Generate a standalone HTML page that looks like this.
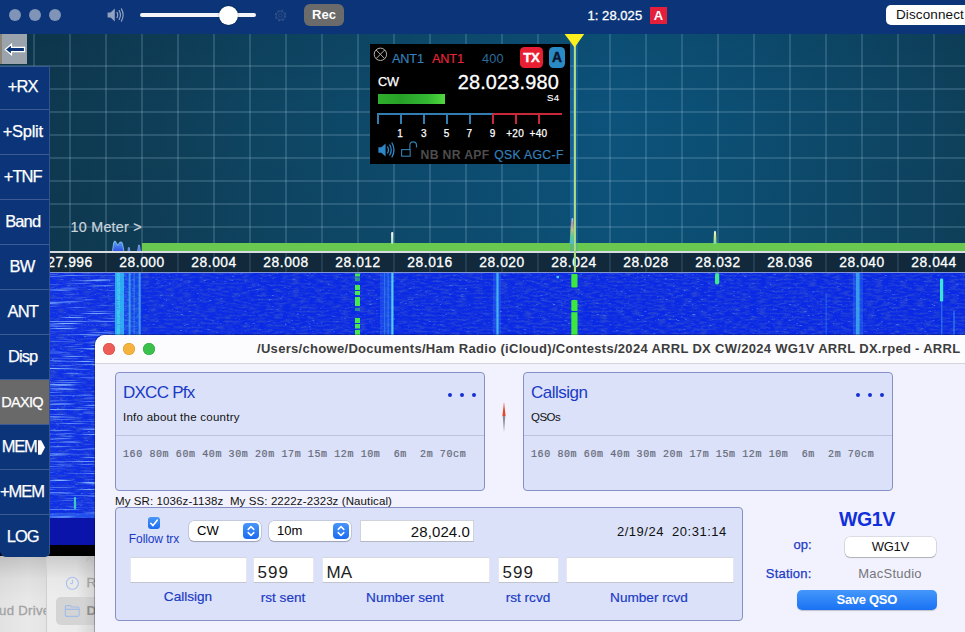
<!DOCTYPE html>
<html><head><meta charset="utf-8"><title>SDR</title>
<style>
*{box-sizing:border-box;margin:0;padding:0}
html,body{width:965px;height:632px;overflow:hidden;background:#e9e9e9;font-family:"Liberation Sans",sans-serif;}
.abs{position:absolute}
#topbar{left:0;top:0;width:965px;height:34px;background:#0b3578}
.tl{width:12.4px;height:12.4px;border-radius:50%;background:#8094b8;top:8.7px}
#pan{left:0;top:34px;width:965px;height:218px;background:linear-gradient(180deg,rgba(0,0,0,.05),rgba(0,0,0,0) 35%,rgba(0,0,0,.02)),linear-gradient(90deg,#0d364c 0%,#0e3a52 8.3%,#0f3e58 16.6%,#0e4460 26.4%,#0d4b6e 44.5%,#0c527a 63.7%,#0c4e73 75.6%,#0e425e 96.9%,#0e405a 100%);overflow:hidden}
.vg{top:0;width:1.6px;height:218px;background:rgba(170,205,228,.19)}
.hg{left:0;width:965px;height:1.6px;background:rgba(170,205,228,.19)}
#fscale{left:0;top:251px;width:965px;height:22.2px;background:#11293a;border-top:2px solid #d6dce0;border-bottom:1.2px solid #7f96d0;overflow:hidden}
.fl{top:0;width:72px;text-align:center;color:#fff;font-size:13.8px;letter-spacing:.55px;line-height:19.2px;-webkit-text-stroke:.3px #fff;padding-left:.55px}
#wf{left:0;top:273px;width:965px;height:272px;background:#0b30d8;overflow:hidden}
#side{left:0;top:66px;width:49.5px;height:490.5px;background:#0c3479;border-radius:0 0 5px 6px;overflow:hidden;border-right:1px solid #34528c}
.sb{left:0;width:49px;padding-right:3.6px;height:45px;color:#fff;font-size:16.5px;letter-spacing:-.9px;-webkit-text-stroke:.25px #fff;text-align:center;line-height:44px;border-top:1px solid #3c5a94;white-space:nowrap}
#win{left:95px;top:335px;width:880px;height:310px;background:#f1f2fd;border-radius:10px 0 0 0;overflow:hidden;box-shadow:0 0 0 1px rgba(0,0,0,.25)}
#tbar{left:0;top:0;width:880px;height:29px;background:#fcfcfe;border-bottom:1px solid #d4d4dc}
.panel{background:#dae1f8;border:1px solid #8790c6;border-radius:4px}
.blue{color:#1b3ac6}
.ts{-webkit-text-stroke:.25px #1b3ac6}
.inp{background:#fff;border:1px solid #e4e6f0;border-top-color:#d4d6e0;border-bottom-color:#c2c4ce;height:26px;top:49px;font-size:17px;line-height:29px;padding-left:3.5px;overflow:hidden;color:#1c1c1c}
.lab{top:81.5px;font-size:13.6px;color:#1b3ac6;-webkit-text-stroke:.18px #1b3ac6;text-align:center;width:140px;white-space:nowrap}
.sel{top:13px;height:20px;background:#fff;border-radius:5px;box-shadow:0 0 0 .5px rgba(0,0,0,.2),0 1px 1px rgba(0,0,0,.2);font-size:13px;line-height:20px;padding-left:8px}
.step{right:2px;top:2px;width:16px;height:16px;border-radius:4px;background:linear-gradient(#4a96f8,#1a6cf0)}
.bands{font-family:"Liberation Mono",monospace;font-size:10px;color:#666a78;-webkit-text-stroke:.2px #666a78;white-space:pre;letter-spacing:.6px}
.mt{top:70px;width:2px;height:9.7px}
.ml{top:83.6px;width:20px;margin-left:-10px;text-align:center;font-size:10px;line-height:12px;color:#fff;white-space:nowrap;letter-spacing:.35px;-webkit-text-stroke:.25px #fff}

</style></head><body>
<div class="abs" style="left:0;top:545px;width:95px;height:12px;background:#000"></div>
<div class="abs" style="left:0;top:556px;width:46px;height:76px;background:linear-gradient(180deg,rgba(0,0,0,.16),rgba(0,0,0,.04) 30%,rgba(0,0,0,0) 60%),linear-gradient(90deg,#e2e2e2,#e9e9e9 60%,#e4e4e4)"></div>
<div class="abs" style="left:45.5px;top:556px;width:1px;height:76px;background:#cfcfcf"></div>
<div class="abs" style="left:46.5px;top:556px;width:49px;height:76px;background:linear-gradient(180deg,rgba(0,0,0,.14),rgba(0,0,0,.02) 30%,rgba(0,0,0,0) 55%),linear-gradient(90deg,#ededed 0%,#ebebeb 60%,#d4d4d4 100%)"></div>
<div class="abs" style="left:56px;top:597px;width:40px;height:28px;background:linear-gradient(90deg,#d4d4d4 70%,#c4c4c4);border-radius:5px 0 0 5px"></div>
<div class="abs" style="left:-1px;top:602px;width:47px;overflow:hidden;font-size:13.2px;line-height:18px;color:#a2a2a2;white-space:nowrap;letter-spacing:.3px;-webkit-text-stroke:.3px #a2a2a2">ud Drive</div>
<svg class="abs" style="left:65px;top:576px" width="15" height="15" viewBox="0 0 15 15"><circle cx="7.4" cy="7.3" r="6" fill="none" stroke="#a9c1ec" stroke-width="1.1"/><path d="M7.4 3.6 L7.4 7.6 L5 7.6" fill="none" stroke="#a9c1ec" stroke-width="1"/></svg>
<svg class="abs" style="left:64px;top:604px" width="17" height="14" viewBox="0 0 17 14"><path d="M1.3 3.2 Q1.3 1.6 2.9 1.6 L6 1.6 L7.4 3 L13.6 3 Q15.2 3 15.2 4.6 L15.2 10.8 Q15.2 12.4 13.6 12.4 L2.9 12.4 Q1.3 12.4 1.3 10.8Z M1.3 5.4 L15.2 5.4" fill="none" stroke="#a2bde8" stroke-width="1.1"/></svg>
<div class="abs" style="left:86.5px;top:574px;font-size:13.5px;line-height:18px;color:#a0a0a0;-webkit-text-stroke:.3px #a0a0a0">R</div>
<div class="abs" style="left:86.5px;top:602px;font-size:13.5px;line-height:18px;color:#8c8c8c;font-weight:bold">D</div>
<svg class="abs" style="left:63px;top:556px" width="30" height="8" viewBox="0 0 30 8"><path d="M2 0 L5 4 L8 0 M9 0 L12 4 L15 0" fill="none" stroke="#c4cad6" stroke-width="1"/><path d="M24 5 L26.5 0 L29 5" fill="none" stroke="#b8b8b8" stroke-width="1.2"/></svg>

<div id="topbar" class="abs">
 <div class="abs tl" style="left:8.8px"></div><div class="abs tl" style="left:28.8px"></div><div class="abs tl" style="left:48.8px"></div>
 <svg class="abs" style="left:107px;top:7px" width="18" height="16" viewBox="0 0 18 16"><path d="M0.6 5.4 L3.6 5.4 L7.8 1.6 L7.8 14.4 L3.6 10.6 L0.6 10.6Z" fill="#93a2bf"/><path d="M10 5.4 Q11.5 8 10 10.6 M12.2 3.6 Q14.7 8 12.2 12.4 M14.4 1.9 Q17.8 8 14.4 14.1" fill="none" stroke="#93a2bf" stroke-width="1.2" stroke-linecap="round"/></svg>
 <div class="abs" style="left:140px;top:13px;width:116px;height:4px;border-radius:2px;background:#f4f5f8"></div>
 <div class="abs" style="left:218.5px;top:5.5px;width:19px;height:19px;border-radius:50%;background:#fff;box-shadow:0 0 2px rgba(0,0,0,.45)"></div>
 <svg class="abs" style="left:273px;top:8px" width="15" height="15" viewBox="0 0 15 15"><circle cx="7.5" cy="7.5" r="5.2" fill="none" stroke="#34528c" stroke-width="1.1" stroke-dasharray="2.2 1.9"/><circle cx="7.5" cy="7.5" r="4.2" fill="none" stroke="#34528c" stroke-width=".9"/><circle cx="7.5" cy="7.5" r="1.8" fill="none" stroke="#34528c" stroke-width=".8"/></svg>
 <div class="abs" style="left:304px;top:4px;width:40px;height:22px;border-radius:6px;background:#6b6b6b;color:#fff;font-weight:bold;font-size:13px;line-height:22px;text-align:center">Rec</div>
 <div class="abs" style="left:587.5px;top:7.5px;font-size:13px;color:#fff;line-height:16px;letter-spacing:.05px;white-space:nowrap;-webkit-text-stroke:.3px #fff">1: 28.025</div>
 <div class="abs" style="left:650px;top:6.5px;width:17px;height:17px;background:#e31f3b;color:#fff;font-weight:bold;font-size:13px;line-height:17px;text-align:center">A</div>
 <div class="abs" style="left:886px;top:5px;width:90px;height:19.5px;border-radius:5px;background:#fff;color:#111;font-size:13.5px;line-height:20px;padding-left:10px;letter-spacing:.12px">Disconnect</div>
</div>

<div id="pan" class="abs">
<div class="abs vg" style="left:33.2px"></div>
<div class="abs vg" style="left:69.2px"></div>
<div class="abs vg" style="left:105.2px"></div>
<div class="abs vg" style="left:141.2px"></div>
<div class="abs vg" style="left:177.2px"></div>
<div class="abs vg" style="left:213.2px"></div>
<div class="abs vg" style="left:249.2px"></div>
<div class="abs vg" style="left:285.2px"></div>
<div class="abs vg" style="left:321.2px"></div>
<div class="abs vg" style="left:357.2px"></div>
<div class="abs vg" style="left:393.2px"></div>
<div class="abs vg" style="left:429.2px"></div>
<div class="abs vg" style="left:465.2px"></div>
<div class="abs vg" style="left:501.2px"></div>
<div class="abs vg" style="left:537.2px"></div>
<div class="abs vg" style="left:573.2px"></div>
<div class="abs vg" style="left:609.2px"></div>
<div class="abs vg" style="left:645.2px"></div>
<div class="abs vg" style="left:681.2px"></div>
<div class="abs vg" style="left:717.2px"></div>
<div class="abs vg" style="left:753.2px"></div>
<div class="abs vg" style="left:789.2px"></div>
<div class="abs vg" style="left:825.2px"></div>
<div class="abs vg" style="left:861.2px"></div>
<div class="abs vg" style="left:897.2px"></div>
<div class="abs vg" style="left:933.2px"></div>
<div class="abs hg" style="top:31.2px"></div>
<div class="abs hg" style="top:54.2px"></div>
<div class="abs hg" style="top:77.2px"></div>
<div class="abs hg" style="top:100.2px"></div>
<div class="abs hg" style="top:123.2px"></div>
<div class="abs hg" style="top:146.2px"></div>
<div class="abs hg" style="top:169.2px"></div>
<div class="abs hg" style="top:192.2px"></div>
<div class="abs" style="left:70.6px;top:184px;font-size:14.3px;color:#c9d4dd;line-height:18px;white-space:nowrap;letter-spacing:.25px;-webkit-text-stroke:.2px #c9d4dd">10 Meter &gt;</div>
<svg class="abs" style="left:110px;top:204px" width="34" height="14" viewBox="0 0 34 14">
 <defs><linearGradient id="bl" x1="0" x2="0" y1="0" y2="1"><stop offset="0" stop-color="#58a8f4"/><stop offset="1" stop-color="#2c48e0"/></linearGradient></defs>
 <path d="M2.4 14 L3.6 5 L4.6 3 L5.6 3.4 L7.6 7.4 L9.8 4.2 L11.6 4 L12.6 6 L13.8 12.6 L14.6 14Z" fill="url(#bl)" stroke="#a8d4fa" stroke-width=".7"/>
 <path d="M17.8 14 L18.4 9.6 L19.4 9.6 L20 14Z" fill="#4a70ec" stroke="#b8d4fa" stroke-width=".5"/>
 <path d="M27.4 14 L28.6 7 L29.4 7 L30.6 14Z" fill="#4a70ec" stroke="#b8d4fa" stroke-width=".5"/>
</svg>
<div class="abs" style="left:142px;top:209px;width:823px;height:8.5px;background:#69c850"></div>
<!-- peaks: pan top = 34 -->
<svg class="abs" style="left:388px;top:197px" width="8" height="13" viewBox="0 0 8 13"><defs><linearGradient id="p1" x1="0" x2="0" y1="0" y2="1"><stop offset="0" stop-color="#f4f8f4"/><stop offset="1" stop-color="#a8e4c0"/></linearGradient></defs><rect x="3.1" y="1" width="2.2" height="12" rx="1" fill="url(#p1)"/></svg>
<svg class="abs" style="left:566px;top:182px" width="12" height="28" viewBox="0 0 12 28"><defs><linearGradient id="p2" x1="0" x2="0" y1="0" y2="1"><stop offset="0" stop-color="#f0e8f0"/><stop offset=".2" stop-color="#e09088"/><stop offset=".45" stop-color="#e0d070"/><stop offset=".7" stop-color="#70d878"/><stop offset="1" stop-color="#50c8c0"/></linearGradient></defs><path d="M3.6 28 L4.6 12 L5.6 2.4 Q6.4 1.6 7.2 2.4 L7.8 12 L8.2 28Z" fill="url(#p2)"/></svg>
<svg class="abs" style="left:710px;top:195px" width="10" height="15" viewBox="0 0 10 15"><defs><linearGradient id="p3" x1="0" x2="0" y1="0" y2="1"><stop offset="0" stop-color="#f4f4e8"/><stop offset=".4" stop-color="#d8e890"/><stop offset="1" stop-color="#70d8a0"/></linearGradient></defs><path d="M3.4 15 L4 3 Q5 .4 6 3 L6.6 15Z" fill="url(#p3)"/></svg>

</div>
<div id="fscale" class="abs">
<div class="abs" style="left:33.2px;top:0;width:1.6px;height:20px;background:rgba(170,205,228,.13)"></div>
<div class="abs" style="left:69.2px;top:0;width:1.6px;height:20px;background:rgba(170,205,228,.13)"></div>
<div class="abs" style="left:105.2px;top:0;width:1.6px;height:20px;background:rgba(170,205,228,.13)"></div>
<div class="abs" style="left:141.2px;top:0;width:1.6px;height:20px;background:rgba(170,205,228,.13)"></div>
<div class="abs" style="left:177.2px;top:0;width:1.6px;height:20px;background:rgba(170,205,228,.13)"></div>
<div class="abs" style="left:213.2px;top:0;width:1.6px;height:20px;background:rgba(170,205,228,.13)"></div>
<div class="abs" style="left:249.2px;top:0;width:1.6px;height:20px;background:rgba(170,205,228,.13)"></div>
<div class="abs" style="left:285.2px;top:0;width:1.6px;height:20px;background:rgba(170,205,228,.13)"></div>
<div class="abs" style="left:321.2px;top:0;width:1.6px;height:20px;background:rgba(170,205,228,.13)"></div>
<div class="abs" style="left:357.2px;top:0;width:1.6px;height:20px;background:rgba(170,205,228,.13)"></div>
<div class="abs" style="left:393.2px;top:0;width:1.6px;height:20px;background:rgba(170,205,228,.13)"></div>
<div class="abs" style="left:429.2px;top:0;width:1.6px;height:20px;background:rgba(170,205,228,.13)"></div>
<div class="abs" style="left:465.2px;top:0;width:1.6px;height:20px;background:rgba(170,205,228,.13)"></div>
<div class="abs" style="left:501.2px;top:0;width:1.6px;height:20px;background:rgba(170,205,228,.13)"></div>
<div class="abs" style="left:537.2px;top:0;width:1.6px;height:20px;background:rgba(170,205,228,.13)"></div>
<div class="abs" style="left:573.2px;top:0;width:1.6px;height:20px;background:rgba(170,205,228,.13)"></div>
<div class="abs" style="left:609.2px;top:0;width:1.6px;height:20px;background:rgba(170,205,228,.13)"></div>
<div class="abs" style="left:645.2px;top:0;width:1.6px;height:20px;background:rgba(170,205,228,.13)"></div>
<div class="abs" style="left:681.2px;top:0;width:1.6px;height:20px;background:rgba(170,205,228,.13)"></div>
<div class="abs" style="left:717.2px;top:0;width:1.6px;height:20px;background:rgba(170,205,228,.13)"></div>
<div class="abs" style="left:753.2px;top:0;width:1.6px;height:20px;background:rgba(170,205,228,.13)"></div>
<div class="abs" style="left:789.2px;top:0;width:1.6px;height:20px;background:rgba(170,205,228,.13)"></div>
<div class="abs" style="left:825.2px;top:0;width:1.6px;height:20px;background:rgba(170,205,228,.13)"></div>
<div class="abs" style="left:861.2px;top:0;width:1.6px;height:20px;background:rgba(170,205,228,.13)"></div>
<div class="abs" style="left:897.2px;top:0;width:1.6px;height:20px;background:rgba(170,205,228,.13)"></div>
<div class="abs" style="left:933.2px;top:0;width:1.6px;height:20px;background:rgba(170,205,228,.13)"></div>
<div class="abs fl" style="left:33.8px">27.996</div>
<div class="abs fl" style="left:105.8px">28.000</div>
<div class="abs fl" style="left:177.8px">28.004</div>
<div class="abs fl" style="left:249.8px">28.008</div>
<div class="abs fl" style="left:321.8px">28.012</div>
<div class="abs fl" style="left:393.8px">28.016</div>
<div class="abs fl" style="left:465.8px">28.020</div>
<div class="abs fl" style="left:537.8px">28.024</div>
<div class="abs fl" style="left:609.8px">28.028</div>
<div class="abs fl" style="left:681.8px">28.032</div>
<div class="abs fl" style="left:753.8px">28.036</div>
<div class="abs fl" style="left:825.8px">28.040</div>
<div class="abs fl" style="left:897.8px">28.044</div>
</div>
<div id="wf" class="abs">
<svg class="abs" style="left:0;top:0" width="965" height="272" viewBox="0 0 965 272">
 <defs>
  <filter id="nz" x="0" y="0" width="100%" height="100%">
   <feTurbulence type="fractalNoise" baseFrequency="0.25 0.8" numOctaves="3" seed="7" result="t"/>
   <feColorMatrix in="t" type="matrix" values="0 0 0 0 0.16  0 0 0 0 0.40  0 0 0 0 1  2.4 0 0 0 -1.58"/>
  </filter>
  <filter id="nz2" x="0" y="0" width="100%" height="100%">
   <feTurbulence type="fractalNoise" baseFrequency="0.025 0.85" numOctaves="2" seed="3" result="t"/>
   <feColorMatrix in="t" type="matrix" values="0 0 0 0 0.22  0 0 0 0 0.45  0 0 0 0 1  3.4 0 0 0 -1.85"/>
  </filter>
  <filter id="nz3" x="0" y="0" width="100%" height="100%">
   <feTurbulence type="fractalNoise" baseFrequency="0.5 0.05" numOctaves="2" seed="11" result="t"/>
   <feColorMatrix in="t" type="matrix" values="0 0 0 0 0.25  0 0 0 0 0.85  0 0 0 0 1  3.0 0 0 0 -0.9"/>
  </filter>
  <filter id="nzd" x="0" y="0" width="100%" height="100%">
   <feTurbulence type="fractalNoise" baseFrequency="0.12 0.5" numOctaves="3" seed="23" result="t"/>
   <feColorMatrix in="t" type="matrix" values="0 0 0 0 0.02  0 0 0 0 0.06  0 0 0 0 0.66  2.6 0 0 0 -1.05"/>
  </filter>
  <filter id="nz4" x="0" y="0" width="100%" height="100%">
   <feTurbulence type="fractalNoise" baseFrequency="0.25 0.7" numOctaves="2" seed="41" result="t"/>
   <feColorMatrix in="t" type="matrix" values="0 0 0 0 0.06  0 0 0 0 0.28  0 0 0 0 0.92  3.0 0 0 0 -1.5"/>
  </filter>
  <linearGradient id="lf" x1="0" x2="1"><stop offset="0" stop-color="#2a5cf0" stop-opacity=".12"/><stop offset="1" stop-color="#2a5cf0" stop-opacity="0"/></linearGradient>
 </defs>
 <rect width="965" height="272" fill="#0a29e4"/>
 <rect x="49" width="200" height="272" fill="url(#lf)"/>
 <rect width="965" height="272" filter="url(#nzd)"/>
 <rect width="965" height="272" filter="url(#nz)"/>
 <rect x="49" width="66" height="246" filter="url(#nz2)"/>
 <!-- cyan band near 28.000 -->
 <rect x="115" y="0" width="26" height="245" fill="#2a80f0" opacity=".28"/>
 <rect x="115" y="0" width="9" height="245" fill="#30bcf2" opacity=".88"/>
 <rect x="117" y="0" width="3" height="245" fill="#48e0f4" opacity=".5"/>
 <rect x="115" y="0" width="9" height="245" filter="url(#nz4)"/>
 <rect x="128.6" y="0" width="2" height="245" fill="#48b8f4" opacity=".7"/>
 <rect x="133.5" y="0" width="1.5" height="245" fill="#48b8f4" opacity=".3"/>
 <rect x="138.6" y="0" width="2" height="245" fill="#48b8f4" opacity=".7"/>
 <rect x="124" y="0" width="17" height="245" filter="url(#nz4)" opacity=".6"/>
 <!-- 28.012 green dashes x=357.5 -->
 <g fill="#46e84e"><rect x="355" y="0.5" width="5" height="3"/><rect x="355" y="4.5" width="5" height="3.5" opacity=".55"/><rect x="355" y="12" width="5" height="5"/><rect x="355" y="18" width="5" height="4"/><rect x="355" y="24" width="5" height="9"/><rect x="355" y="35" width="5" height="3" opacity=".5"/><rect x="355" y="45" width="5" height="5"/><rect x="355" y="51" width="5" height="4.5"/><rect x="355" y="57" width="5" height="6"/></g>
 <!-- 28.0139 cyan line -->
 <rect x="380" y="0" width="13" height="246" fill="#2a70f4" opacity=".38"/>
 <rect x="384" y="0" width="1.2" height="246" fill="#48b8f4" opacity=".35"/>
 <rect x="387.5" y="0" width="1.2" height="246" fill="#48b8f4" opacity=".4"/>
 <rect x="391.3" y="0" width="2.2" height="246" fill="#58dcf6" opacity=".9"/>
 <!-- 28.0198 cyan -->
 <rect x="493" y="0" width="8" height="246" fill="#2a70f4" opacity=".4"/>
 <rect x="496.4" y="0" width="2.2" height="246" fill="#4cccf4" opacity=".8"/>
 <!-- dot -->
 <rect x="556.5" y="3" width="2.5" height="2" fill="#40d0f0"/>
 <!-- 28.024 green -->
 <g fill="#3ce83e"><rect x="571.3" y="1" width="6.2" height="13.5" rx="1"/><rect x="571.3" y="27" width="6.2" height="11" rx="1"/><rect x="571.3" y="39.2" width="6.2" height="23"/></g>
 <!-- 28.032 green -->
 <rect x="715" y="0" width="4.2" height="11.5" rx="1.8" fill="#40e88c"/>
 <!-- 28.0398 cyan -->
 <rect x="853" y="0" width="10" height="246" fill="#2a78f4" opacity=".42"/>
 <rect x="856" y="0" width="3.6" height="246" fill="#44bcf0" opacity=".7"/>
 <!-- 28.0445 -->
 <rect x="940" y="5.5" width="3.2" height="23" rx="1.2" fill="#3ce4d8"/>
 <rect x="941" y="28" width="1.4" height="40" fill="#3ab0f0" opacity=".45"/>
 <rect x="825.5" y="20" width="1.4" height="45" fill="#3a90f0" opacity=".4"/>
 <rect x="953.2" y="38" width="1.6" height="30" fill="#3aa0f0" opacity=".55"/>
 <!-- bottom left tick -->
 <rect x="73.9" y="224" width="2.2" height="12" rx="1" fill="#40d8c0" opacity=".9"/>
 <rect x="49" y="240" width="46" height="5" fill="#3a78f8" opacity=".45"/>
 <!-- dark band -->
 <rect x="0" y="245" width="965" height="27" fill="#0a14aa"/>
</svg>
</div>

<!-- passband + marker line -->
<div class="abs" style="left:569.5px;top:34px;width:8.8px;height:218px;background:rgba(60,150,230,.26)"></div>
<div class="abs" style="left:573.6px;top:46px;width:2.2px;height:226px;background:linear-gradient(90deg,#c0dc74,#92d690)"></div>
<svg class="abs" style="left:564px;top:34px" width="21" height="14" viewBox="0 0 21 14"><path d="M0.6 0 L20.2 0 L10.6 13.5Z" fill="#fdf01e"/></svg>
<!-- VFO flag -->
<div class="abs" id="flag" style="left:370px;top:44px;width:199.5px;height:119.6px;background:#000;overflow:hidden">
 <svg class="abs" style="left:2.5px;top:2.5px" width="15" height="15" viewBox="0 0 15 15"><circle cx="7.4" cy="7.3" r="6.2" fill="none" stroke="#b4b0a8" stroke-width="1"/><path d="M3.1 3 L11.7 11.6 M11.7 3 L3.1 11.6" stroke="#b4b0a8" stroke-width="1"/></svg>
 <div class="abs" style="left:22px;top:7.6px;font-size:12.7px;line-height:15px;color:#3280bc;letter-spacing:-.15px;-webkit-text-stroke:.2px #3280bc">ANT1</div>
 <div class="abs" style="left:62px;top:7.6px;font-size:12.7px;line-height:15px;color:#e6243a;letter-spacing:-.15px;-webkit-text-stroke:.2px #e6243a">ANT1</div>
 <div class="abs" style="left:112px;top:7.6px;font-size:12.7px;line-height:15px;color:#2a6e9e;letter-spacing:.25px">400</div>
 <div class="abs" style="left:150px;top:3px;width:23px;height:21px;border-radius:4.5px;background:#e81f33;color:#fff;font-weight:bold;font-size:13.2px;line-height:21px;text-align:center;letter-spacing:-.2px;-webkit-text-stroke:.4px #fff">TX</div>
 <div class="abs" style="left:179px;top:3px;width:16px;height:21px;border-radius:4.5px;background:#2a8ac6;color:#08152c;font-weight:bold;font-size:13.8px;line-height:22.4px;text-align:center;-webkit-text-stroke:.4px #08152c">A</div>
 <div class="abs" style="left:8px;top:30px;font-size:12.7px;line-height:16px;color:#fff;-webkit-text-stroke:.25px #fff;letter-spacing:-.2px">CW</div>
 <div class="abs" style="left:50px;top:26px;width:139px;text-align:right;font-size:19.9px;line-height:24px;color:#fff;white-space:nowrap;letter-spacing:.18px;-webkit-text-stroke:.3px #fff">28.023.980</div>
 <div class="abs" style="left:159.2px;top:48px;width:30px;text-align:right;font-size:9.6px;line-height:12px;color:#fff;letter-spacing:.2px;-webkit-text-stroke:.15px #fff">S4</div>
 <div class="abs" style="left:8px;top:50px;width:67px;height:9.8px;background:linear-gradient(90deg,#2fae2c,#28a028 35%,#33b833 75%,#52d83e)"></div>
 <!-- meter -->
 <div class="abs" style="left:7.2px;top:69px;width:115.4px;height:2.1px;background:#337eb0"></div>
 <div class="abs" style="left:122.6px;top:69px;width:69.2px;height:2.1px;background:#c82837"></div>
 <div class="abs mt" style="left:7.2px;background:#337eb0"></div>
 <div class="abs mt" style="left:29.9px;background:#337eb0"></div>
 <div class="abs mt" style="left:52.9px;background:#337eb0"></div>
 <div class="abs mt" style="left:75.9px;background:#337eb0"></div>
 <div class="abs mt" style="left:98.7px;background:#337eb0"></div>
 <div class="abs mt" style="left:122.2px;background:#c82837"></div>
 <div class="abs mt" style="left:145px;background:#c82837"></div>
 <div class="abs mt" style="left:168px;background:#c82837"></div>
 <div class="abs ml" style="left:30.2px">1</div>
 <div class="abs ml" style="left:53.9px">3</div>
 <div class="abs ml" style="left:76.7px">5</div>
 <div class="abs ml" style="left:99.5px">7</div>
 <div class="abs ml" style="left:122.8px">9</div>
 <div class="abs ml" style="left:145.2px">+20</div>
 <div class="abs ml" style="left:168.5px">+40</div>
 <!-- speaker -->
 <svg class="abs" style="left:8px;top:98px" width="18" height="16" viewBox="0 0 18 16"><path d="M0.4 5.2 L3.4 5.2 L7.6 1.4 L7.6 14.6 L3.4 10.8 L0.4 10.8Z" fill="#2d87c8"/><path d="M9.6 5 Q11.4 8 9.6 11 M11.8 3 Q14.6 8 11.8 13 M14 1 Q17.9 8 14 15" fill="none" stroke="#2d87c8" stroke-width="1.35" stroke-linecap="round"/></svg>
 <!-- lock open -->
 <svg class="abs" style="left:30px;top:96px" width="18" height="18" viewBox="0 0 18 18"><rect x="1.6" y="9.6" width="8.6" height="6.6" fill="none" stroke="#337eb0" stroke-width="1.1"/><path d="M9.9 9.6 L9.9 5.2 Q9.9 1.9 13.2 1.9 Q16.5 1.9 16.5 5.2 L16.5 7.4" fill="none" stroke="#337eb0" stroke-width="1.2"/></svg>
 <div class="abs" style="left:50.5px;top:104px;font-size:12.2px;font-weight:bold;line-height:14px;color:#4d4d4d;white-space:nowrap;letter-spacing:.35px">NB NR APF</div>
 <div class="abs" style="left:124.2px;top:104px;font-size:12.2px;line-height:14px;color:#3280bc;white-space:nowrap;letter-spacing:.35px;-webkit-text-stroke:.2px #3280bc">QSK AGC-F</div>
</div>

<div class="abs" style="left:0;top:34px;width:27px;height:30px;background:#9ba4ac;border-left:2px solid #8d8478"><svg class="abs" style="left:2px;top:9px" width="22" height="13" viewBox="0 0 22 13"><path d="M1.2 6.5 L7.5 1.2 L7.5 4.3 L20.5 4.3 L20.5 8.7 L7.5 8.7 L7.5 11.8 Z" fill="#0c3479" stroke="#fff" stroke-width="1.2" stroke-linejoin="miter"/></svg></div>
<div id="side" class="abs">
<div class="abs sb" style="top:0px;height:43px;line-height:38.4px;">+RX</div>
<div class="abs sb" style="top:43px;height:45px;line-height:42.8px;letter-spacing:-.3px;">+Split</div>
<div class="abs sb" style="top:88px;height:45px;line-height:42.8px;">+TNF</div>
<div class="abs sb" style="top:133px;height:45px;line-height:42.8px;">Band</div>
<div class="abs sb" style="top:178px;height:45px;line-height:42.8px;padding-right:5px;">BW</div>
<div class="abs sb" style="top:223px;height:45px;line-height:42.8px;">ANT</div>
<div class="abs sb" style="top:268px;height:45px;line-height:42.8px;">Disp</div>
<div class="abs sb" style="top:313px;height:45px;line-height:42.8px;background:#696969;font-size:14.6px;letter-spacing:-.75px;padding-top:1px;padding-right:5px;">DAXIQ</div>
<div class="abs sb" style="top:358px;height:45px;line-height:42.8px;letter-spacing:-1.2px;text-indent:1px;">MEM<svg width="7" height="15" viewBox="0 0 7 15" style="vertical-align:-2.5px;margin-left:1px"><path d="M0 0.3 L3.2 0.3 L7 7.5 L3.2 14.7 L0 14.7Z" fill="#fff"/></svg></div>
<div class="abs sb" style="top:403px;height:45px;line-height:42.8px;letter-spacing:-1.1px;text-indent:-1.5px;">+MEM</div>
<div class="abs sb" style="top:448px;height:43px;line-height:40.8px;padding-top:1px;">LOG</div>
</div>
<div id="win" class="abs">
 <div id="tbar" class="abs">
  <div class="abs" style="left:8px;top:8px;width:12px;height:12px;border-radius:50%;background:#ee5c57;box-shadow:inset 0 0 0 .5px #d44a44"></div>
  <div class="abs" style="left:28px;top:8px;width:12px;height:12px;border-radius:50%;background:#f5b33e;box-shadow:inset 0 0 0 .5px #d89a2c"></div>
  <div class="abs" style="left:48px;top:8px;width:12px;height:12px;border-radius:50%;background:#3cc04c;box-shadow:inset 0 0 0 .5px #2ea53c"></div>
  <div class="abs" id="ttl" style="left:162px;top:5px;font-size:13px;font-weight:bold;color:#3d3d3d;white-space:nowrap;line-height:18px;letter-spacing:.305px">/Users/chowe/Documents/Ham Radio (iCloud)/Contests/2024 ARRL DX CW/2024 WG1V ARRL DX.rped - ARRL</div>
 </div>
 <!-- panel 1 : left = 115-95=20, top = 372-335=37 -->
 <div class="abs panel" style="left:20px;top:37px;width:370px;height:119px">
  <div class="abs blue" style="left:7px;top:10px;font-size:17px;line-height:20px;white-space:nowrap;letter-spacing:-.75px">DXCC Pfx</div>
  <div class="abs" style="left:7px;top:37px;font-size:11.5px;line-height:14px;color:#111;white-space:nowrap;letter-spacing:.25px">Info about the country</div>
  <div class="abs" style="left:0;top:62px;width:368px;height:1px;background:#bcc3de"></div>
  <div class="abs bands" style="left:7px;top:76px;line-height:12px">160 80m 60m 40m 30m 20m 17m 15m 12m 10m  6m  2m 70cm</div>
  <div class="abs" style="left:332px;top:20px;width:4px;height:4px;border-radius:50%;background:#1530d0"></div>
  <div class="abs" style="left:344px;top:20px;width:4px;height:4px;border-radius:50%;background:#1530d0"></div>
  <div class="abs" style="left:356px;top:20px;width:4px;height:4px;border-radius:50%;background:#1530d0"></div>
 </div>
 <!-- compass needle -->
 <svg class="abs" style="left:405.5px;top:67px" width="6" height="30" viewBox="0 0 6 30"><path d="M3 0 L4.6 14 L1.4 14Z" fill="#e0472f"/><path d="M3 30 L4.3 14 L1.7 14Z" fill="#8e8e96"/></svg>
 <!-- panel 2 : left = 523-95=428 -->
 <div class="abs panel" style="left:428px;top:37px;width:370px;height:119px">
  <div class="abs blue" style="left:7px;top:10px;font-size:17px;line-height:20px;white-space:nowrap;letter-spacing:-.5px">Callsign</div>
  <div class="abs" style="left:7px;top:37px;font-size:11.5px;line-height:14px;color:#111;white-space:nowrap;letter-spacing:-.5px">QSOs</div>
  <div class="abs" style="left:0;top:62px;width:368px;height:1px;background:#bcc3de"></div>
  <div class="abs bands" style="left:7px;top:76px;line-height:12px">160 80m 60m 40m 30m 20m 17m 15m 12m 10m  6m  2m 70cm</div>
  <div class="abs" style="left:332px;top:20px;width:4px;height:4px;border-radius:50%;background:#1530d0"></div>
  <div class="abs" style="left:344px;top:20px;width:4px;height:4px;border-radius:50%;background:#1530d0"></div>
  <div class="abs" style="left:356px;top:20px;width:4px;height:4px;border-radius:50%;background:#1530d0"></div>
 </div>
 <div class="abs" style="left:20px;top:158.5px;font-size:11.5px;line-height:14px;color:#111;white-space:pre;letter-spacing:.1px">My SR: 1036z-1138z  My SS: 2222z-2323z (Nautical)</div>
 <!-- entry panel: left 20, top 507-335=172, w 628, h 114 -->
 <div class="abs panel" style="left:20px;top:172px;width:628px;height:114px">
  <div class="abs" style="left:32px;top:9px;width:12px;height:12px;border-radius:3px;background:linear-gradient(#4a96f8,#1b6df0)"><svg class="abs" style="left:0;top:0" width="12" height="12" viewBox="0 0 12 12"><path d="M2.8 6.3 L5 8.6 L9.2 3.2" fill="none" stroke="#fff" stroke-width="1.6" stroke-linecap="round" stroke-linejoin="round"/></svg></div>
  <div class="abs blue" style="left:0px;top:23.5px;width:76px;text-align:center;font-size:12px;line-height:14px;white-space:nowrap;letter-spacing:-.1px">Follow trx</div>
  <div class="abs sel" style="left:73px;width:72px">CW<div class="abs step"><svg width="16" height="16" viewBox="0 0 16 16"><path d="M5.2 6.4 L8 3.6 L10.8 6.4 M5.2 9.6 L8 12.4 L10.8 9.6" fill="none" stroke="#fff" stroke-width="1.5" stroke-linecap="round" stroke-linejoin="round"/></svg></div></div>
  <div class="abs sel" style="left:153px;width:82px">10m<div class="abs step"><svg width="16" height="16" viewBox="0 0 16 16"><path d="M5.2 6.4 L8 3.6 L10.8 6.4 M5.2 9.6 L8 12.4 L10.8 9.6" fill="none" stroke="#fff" stroke-width="1.5" stroke-linecap="round" stroke-linejoin="round"/></svg></div></div>
  <div class="abs" style="left:244px;top:12px;width:114px;height:22px;background:#fff;border:1px solid #d0d2dc;border-bottom-color:#b4b6c0;font-size:15px;line-height:22px;text-align:right;padding-right:3px;color:#111;letter-spacing:.1px">28,024.0</div>
  <div class="abs" style="left:501px;top:15.5px;font-size:13px;line-height:16px;color:#111;white-space:pre;letter-spacing:.5px">2/19/24  20:31:14</div>
  <div class="abs inp" style="left:14px;width:117px"></div>
  <div class="abs inp" style="left:137px;width:61px;letter-spacing:1px">599</div>
  <div class="abs inp" style="left:206px;width:168px">MA</div>
  <div class="abs inp" style="left:382px;width:61px;letter-spacing:1px">599</div>
  <div class="abs inp" style="left:450px;width:168px"></div>
  <div class="abs lab" style="left:2px;top:80.5px">Callsign</div>
  <div class="abs lab" style="left:97px">rst sent</div>
  <div class="abs lab" style="left:219px">Number sent</div>
  <div class="abs lab" style="left:342px">rst rcvd</div>
  <div class="abs lab" style="left:463px">Number rcvd</div>
 </div>
 <!-- right column -->
 <div class="abs" style="left:712px;top:171.5px;width:120px;text-align:center;font-size:19.5px;font-weight:bold;line-height:24px;color:#1030dc;letter-spacing:-.4px">WG1V</div>
 <div class="abs blue ts" style="left:659.5px;top:202px;width:57px;text-align:right;font-size:13px;line-height:16px">op:</div>
 <div class="abs" style="left:750px;top:202px;width:90.5px;height:20px;background:#fff;border-radius:5px;box-shadow:0 0 0 .5px rgba(0,0,0,.18),0 1px 1px rgba(0,0,0,.2);text-align:center;font-size:13px;line-height:20px;color:#111;letter-spacing:-.3px">WG1V</div>
 <div class="abs blue ts" style="left:659.5px;top:230.5px;width:57px;text-align:right;font-size:13px;line-height:16px;letter-spacing:.2px">Station:</div>
 <div class="abs" style="left:735px;top:230.5px;width:120px;text-align:center;font-size:13px;line-height:16px;color:#76767c;letter-spacing:.23px">MacStudio</div>
 <div class="abs" style="left:702px;top:255px;width:139.5px;height:19.5px;border-radius:5px;background:linear-gradient(#4497fb,#1a72f4);color:#fff;font-weight:bold;font-size:13px;line-height:19px;text-align:center;letter-spacing:-.3px;box-shadow:0 1px 1px rgba(0,0,0,.2)">Save QSO</div>
</div>

</body></html>
